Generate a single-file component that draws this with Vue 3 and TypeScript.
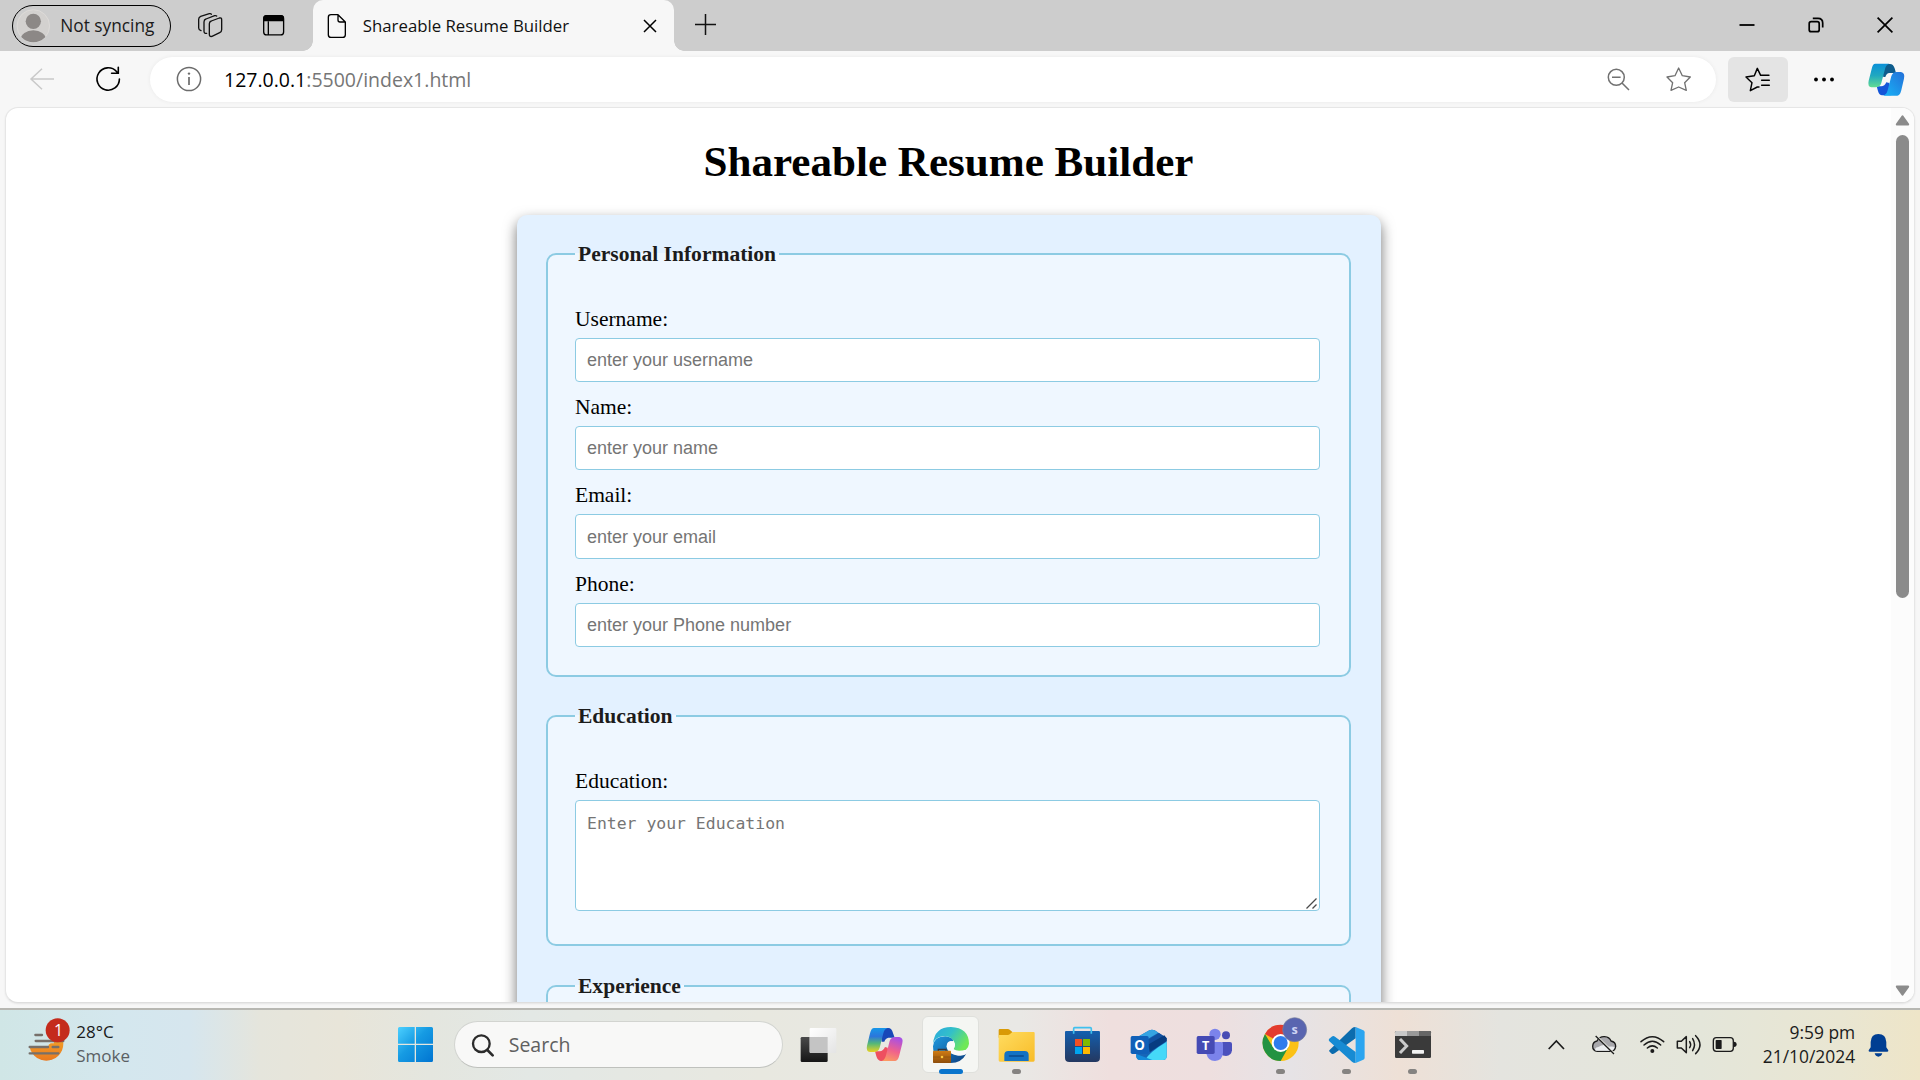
<script setup lang="ts">
interface Field {
  id: string
  label: string
  placeholder: string
  type: string
}

const fields: Field[] = [
  { id: 'username', label: 'Username:', placeholder: 'enter your username', type: 'text' },
  { id: 'name', label: 'Name:', placeholder: 'enter your name', type: 'text' },
  { id: 'email', label: 'Email:', placeholder: 'enter your email', type: 'email' },
  { id: 'phone', label: 'Phone:', placeholder: 'enter your Phone number', type: 'tel' },
]
</script>

<template>
  <div class="screen">
    <header class="tabbar">
      <div class="profile">
        <svg class="avatar" viewBox="50 28 100 102" width="33.3" height="34">
          <defs><clipPath id="avatarClip"><circle cx="99" cy="79" r="49" /></clipPath></defs>
          <circle cx="99" cy="79" r="49" fill="#d3d1cf" stroke="#e2e0dd" stroke-width="2" />
          <g fill="#8c8886" clip-path="url(#avatarClip)">
            <circle cx="99" cy="65" r="23" />
            <ellipse cx="99" cy="119" rx="38" ry="27" />
          </g>
        </svg>
        <span>Not syncing</span>
      </div>
      <svg class="collections" viewBox="591 36 78 78" width="26" height="26" fill="none" stroke="#111" stroke-width="4" stroke-linejoin="round" stroke-linecap="round">
        <path d="M628 71 q0 -6 6 -8 L658 54 q7 -2 7 5 V89 q0 6 -6 9 L636 109 q-8 2 -8 -6 Z" />
        <path d="M620 100 q-8 1 -8 -6 V66 q0 -7 6 -9 L644 47 q4 -1 6 1" />
        <path d="M603 92 q-7 -2 -7 -8 V58 q0 -6 6 -9 L628 41 q5 -1 6 2" />
      </svg>
      <svg class="tabactions" viewBox="784 43 70 68" width="23.3" height="22.6">
        <rect x="789" y="48" width="60" height="58" rx="9" fill="none" stroke="#000" stroke-width="4" />
        <path d="M788 65 V56 q0 -10 10 -10 H840 q10 0 10 10 V65 Z" fill="#000" />
        <path d="M803 65 V106" stroke="#000" stroke-width="4" />
      </svg>
      <div class="tab">
        <svg class="doc" viewBox="981 39 60 78" width="20" height="26" fill="none" stroke="#000" stroke-width="4" stroke-linejoin="round">
          <path d="M993 44 H1014 L1036 66 V104 q0 8 -8 8 H993 q-8 0 -8 -8 V52 q0 -8 8 -8 Z M1014 44 V60 q0 6 6 6 H1036" />
        </svg>
        <span class="tab-title">Shareable Resume Builder</span>
        <svg class="tab-close" viewBox="0 0 14 14" width="14" height="14" stroke="#000" stroke-width="1.5"><path d="M1 1 L13 13 M13 1 L1 13" /></svg>
      </div>
      <svg class="plus" viewBox="0 0 21 21" width="21" height="21" stroke="#111" stroke-width="1.5"><path d="M10.5 0 V21 M0 10.5 H21" /></svg>
      <div class="window-controls">
        <svg viewBox="0 0 16 16" width="16" height="16" stroke="#000" stroke-width="1.8"><path d="M0.5 8 H15.5" /></svg>
        <svg viewBox="0 0 16 16" width="16" height="16" fill="none" stroke="#000" stroke-width="1.7">
          <rect x="1.2" y="4.7" width="10" height="10" rx="2" />
          <path d="M4.8 1.3 H10 Q14.7 1.3 14.7 6 V10.6" />
        </svg>
        <svg viewBox="0 0 16 16" width="16" height="16" stroke="#000" stroke-width="1.7"><path d="M0.6 0.6 L15.4 15.4 M15.4 0.6 L0.6 15.4" /></svg>
      </div>
    </header>

    <nav class="toolbar">
      <svg class="back" viewBox="0 0 24 22" width="24" height="22" fill="none" stroke="#c9c9c9" stroke-width="1.5"><path d="M24 11 H1 M12 0.8 L1 11 L12 21.2" /></svg>
      <svg class="reload" viewBox="0 0 25 26" width="25" height="26" fill="none" stroke="#000" stroke-width="1.6" stroke-linecap="round">
        <path d="M23.4 13 A11.2 11.2 0 1 1 20.5 5.5 L22 7 M22.3 1.2 V7.3 H15.6" />
      </svg>
      <div class="address">
        <svg class="info" viewBox="0 0 26 26" width="26" height="26" fill="none" stroke="#6b6b6b" stroke-width="1.5">
          <circle cx="13" cy="13" r="11.6" /><path d="M13 11 V19" stroke-width="1.7" /><circle cx="13" cy="7.6" r="1.2" fill="#6b6b6b" stroke="none" />
        </svg>
        <span class="url"><b>127.0.0.1</b>:5500/index1.html</span>
        <svg class="zoomout" viewBox="0 0 23 23" width="23" height="23" fill="none" stroke="#717171" stroke-width="1.5"><circle cx="9.3" cy="9.3" r="8" /><path d="M5 9.3 H13.6 M15 15 L22 22" /></svg>
        <svg class="star" viewBox="317 202 76 74" width="25.3" height="24.7" fill="none" stroke="#717171" stroke-width="4" stroke-linejoin="round">
          <path d="M355 205 L366 228 L390 232 L373 249 L378 272 L355 262 L332 272 L337 249 L320 232 L344 228 Z" />
        </svg>
      </div>
      <div class="favorites">
        <svg viewBox="556 202 76 74" width="25.3" height="24.7" fill="none" stroke="#000" stroke-width="4.4" stroke-linejoin="round" stroke-linecap="round">
          <path d="M598 262 L593 262 L572 273 L577 249 L559 232 L584 228 L593 206 L603 227 H628 M606 242 H629 M606 257 H629" />
        </svg>
      </div>
      <svg class="dots" viewBox="0 0 20 5" width="20" height="5"><circle cx="2" cy="2.5" r="1.9" /><circle cx="10" cy="2.5" r="1.9" /><circle cx="18" cy="2.5" r="1.9" /></svg>
      <svg class="copilot" viewBox="926 190 112 100" width="37.3" height="33.3">
        <defs>
          <linearGradient id="ca" x1="0" y1="0" x2="0" y2="1"><stop offset="0" stop-color="#0a90d8" /><stop offset=".5" stop-color="#20a8c0" /><stop offset="1" stop-color="#62dc92" /></linearGradient>
          <linearGradient id="cb" x1="1" y1="0" x2="0" y2="1"><stop offset="0" stop-color="#2370d8" /><stop offset="1" stop-color="#18b4f8" /></linearGradient>
        </defs>
        <path d="M966 193 H992 Q1002 193 1006 206 L1010 220 H990 Q982 220 978 232 L972 232 Z" fill="#0e5c8c" />
        <path d="M996 287 H968 Q960 287 956 274 L952 260 H966 Q976 260 981 248 L990 250 Z" fill="#1455d8" />
        <path d="M948 192 H990 Q980 195 977 208 L966 250 Q962 263 948 263 H936 Q924 261 928 243 L937 208 Q940 192 948 192 Z" fill="url(#ca)" />
        <path d="M1014 288 H972 Q982 285 985 272 L996 230 Q1000 217 1012 217 H1025 Q1038 219 1034 237 L1026 272 Q1022 288 1014 288 Z" fill="url(#cb)" />
      </svg>
    </nav>

    <section class="viewport">
      <main class="page">
        <h1>Shareable Resume Builder</h1>
        <form class="card">
          <fieldset>
            <legend>Personal Information</legend>
            <template v-for="field in fields" :key="field.id">
              <label :for="field.id">{{ field.label }}</label>
              <input :id="field.id" :type="field.type" :placeholder="field.placeholder" />
            </template>
          </fieldset>
          <fieldset>
            <legend>Education</legend>
            <label for="education">Education:</label>
            <div class="area">
              <textarea id="education" placeholder="Enter your Education"></textarea>
              <svg class="grip" viewBox="0 0 11 11" width="11" height="11" stroke="#4a4a4a" stroke-width="1.3"><path d="M0.5 10.5 L10.5 0.5 M6.5 10.5 L10.5 6.5" /></svg>
            </div>
          </fieldset>
          <fieldset class="experience">
            <legend>Experience</legend>
          </fieldset>
        </form>
      </main>
      <aside class="scrollbar">
        <svg viewBox="0 0 15 11" width="15" height="11"><path d="M7.5 1.4 L13.2 9.4 H1.8 Z" fill="#8b8b8b" stroke="#8b8b8b" stroke-width="2" stroke-linejoin="round" /></svg>
        <div class="thumb"></div>
        <svg class="down" viewBox="0 0 15 11" width="15" height="11"><path d="M7.5 9.6 L13.2 1.6 H1.8 Z" fill="#8b8b8b" stroke="#8b8b8b" stroke-width="2" stroke-linejoin="round" /></svg>
      </aside>
    </section>

    <footer class="taskbar">
      <svg class="weather" viewBox="84 78 128 136" width="42.7" height="45.3">
        <defs>
          <linearGradient id="sun" x1="0" y1="0" x2="0" y2="1"><stop offset="0" stop-color="#f8b62c" /><stop offset="1" stop-color="#e97920" /></linearGradient>
          <clipPath id="sunClip"><path d="M84 170 H143 Q145 160 152 157 H162 Q158 148 175 148 H212 V214 H84 Z" /></clipPath>
        </defs>
        <circle cx="139" cy="158" r="51" fill="url(#sun)" clip-path="url(#sunClip)" />
        <path d="M106 132 H126 M107 150 H190 M89 168 H144 M158 168 H175 M89 187 H175" stroke="#77706a" stroke-width="7" stroke-linecap="round" />
        <circle cx="173" cy="118" r="36" fill="#c42b1c" />
        <text x="176" y="135" fill="#fff" font-size="48" text-anchor="middle" font-family="Open Sans, sans-serif">1</text>
      </svg>
      <div class="forecast"><span>28°C</span><span class="muted">Smoke</span></div>
      <svg class="start" viewBox="0 0 35 35" width="35" height="35">
        <defs><linearGradient id="win" x1="0" y1="0" x2="35" y2="35" gradientUnits="userSpaceOnUse"><stop offset="0" stop-color="#4cd0ff" /><stop offset=".45" stop-color="#169be3" /><stop offset="1" stop-color="#0074d1" /></linearGradient></defs>
        <path fill="url(#win)" d="M1.5 0 H16.7 V16.7 H0 V1.5 Q0 0 1.5 0 Z M18 0 H33.5 Q35 0 35 1.5 V16.7 H18 Z M0 18 H16.7 V35 H1.5 Q0 35 0 33.5 Z M18 18 H35 V33.5 Q35 35 33.5 35 H18 Z" />
      </svg>
      <div class="search">
        <svg viewBox="270 125 72 72" width="24" height="24" fill="none" stroke="#2b2b2b" stroke-width="7" stroke-linecap="round"><circle cx="301" cy="157" r="25" /><path d="M319 176 L335 192" stroke-width="8" /></svg>
        <span>Search</span>
      </div>
      <div class="apps">
        <div class="app">
          <svg viewBox="61 108 114 108" width="38" height="36">
            <defs>
              <linearGradient id="tv" x1="0" y1="0" x2="0" y2="1"><stop offset="0" stop-color="#4a4a4a" /><stop offset="1" stop-color="#161616" /></linearGradient>
              <linearGradient id="tw" x1="0" y1="0" x2="1" y2="1"><stop offset="0" stop-color="#fff" /><stop offset="1" stop-color="#e4e4e4" /></linearGradient>
            </defs>
            <rect x="63" y="138" width="81" height="75" rx="4" fill="url(#tv)" />
            <rect x="90" y="111" width="80" height="75" rx="3" fill="url(#tw)" />
            <path d="M90 138 H144 V186 H93 Q90 186 90 183 Z" fill="#c4c4c4" />
          </svg>
        </div>
        <div class="app">
          <svg viewBox="259 108 114 106" width="38" height="35.3">
            <defs>
              <linearGradient id="pa" x1="0" y1="0" x2="0" y2="1"><stop offset="0" stop-color="#1697e8" /><stop offset=".35" stop-color="#2b76dc" /><stop offset=".65" stop-color="#55b878" /><stop offset="1" stop-color="#e8d322" /></linearGradient>
              <linearGradient id="pb" x1=".6" y1="0" x2=".3" y2="1"><stop offset="0" stop-color="#a850e4" /><stop offset=".55" stop-color="#f0628c" /><stop offset="1" stop-color="#fb9a62" /></linearGradient>
            </defs>
            <path d="M300 111 H326 Q336 111 340 126 L345 140 H326 Q318 141 314 152 L306 152 Z" fill="#1848b8" />
            <path d="M330 210 H303 Q294 209 290 196 L286 181 H300 Q311 180 316 168 L324 170 Z" fill="#ee5060" />
            <path d="M283 111 H324 Q314 114 311 127 L300 170 Q296 183 282 183 H271 Q258 182 262 164 L271 127 Q275 111 283 111 Z" fill="url(#pa)" />
            <path d="M347 210 H306 Q316 207 319 193 L330 150 Q334 138 348 138 H359 Q372 140 368 157 L359 193 Q355 210 347 210 Z" fill="url(#pb)" />
          </svg>
        </div>
        <div class="app">
          <div class="tile">
            <svg viewBox="456 105 114 114" width="38" height="38">
              <defs>
                <linearGradient id="ea" x1="0" y1="0" x2="1" y2=".5"><stop offset="0" stop-color="#2aa8e0" /><stop offset=".5" stop-color="#33c0c8" /><stop offset="1" stop-color="#6fe856" /></linearGradient>
                <linearGradient id="eb" x1="0" y1="0" x2="1" y2="1"><stop offset="0" stop-color="#1f9ae0" /><stop offset="1" stop-color="#0c3f80" /></linearGradient>
                <linearGradient id="ec" x1="0" y1="0" x2="0" y2="1"><stop offset="0" stop-color="#d07c14" /><stop offset="1" stop-color="#8e4e0c" /></linearGradient>
              </defs>
              <path d="M459 166 Q462 136 496 136 Q520 140 520 150 Q499 150 500 168 Q504 190 534 194 Q552 194 559 188 Q544 216 512 216 Q459 212 459 166 Z" fill="url(#eb)" />
              <path d="M459 158 Q464 108 513 108 Q566 110 567 158 Q564 181 538 181 Q522 181 520 174 Q526 168 525 160 Q519 134 489 136 Q466 138 459 158 Z" fill="url(#ea)" />
              <path d="M500 168 Q500 150 513 150 Q525 152 525 162 Q522 170 521 175 Q532 183 559 176 Q560 183 557 189 Q536 196 518 188 Q504 181 500 168 Z" fill="#fafafa" />
              <path d="M475 180 v-5 h23 v5" fill="none" stroke="#34343c" stroke-width="4" />
              <rect x="459" y="179" width="54" height="37" rx="2" fill="url(#ec)" />
              <path d="M459 198 H513" stroke="#88500f" stroke-width="2" /><circle cx="486" cy="198" r="4" fill="#ffc83c" />
            </svg>
          </div>
          <i class="pill active"></i>
        </div>
        <div class="app">
          <svg viewBox="655 108 114 108" width="38" height="36">
            <defs><linearGradient id="fo" x1="0" y1="0" x2="1" y2="1"><stop offset="0" stop-color="#ffdc60" /><stop offset="1" stop-color="#f8bc28" /></linearGradient></defs>
            <path d="M657 118 Q657 114 661 114 H684 Q688 114 691 117 L698 123 V140 H657 Z" fill="#d99a06" />
            <path d="M657 132 H684 Q688 132 692 128 L698 123 H762 Q765 123 765 127 V208 Q765 212 761 212 H661 Q657 212 657 208 Z" fill="url(#fo)" />
            <path d="M674 210 V192 Q674 180 686 180 H735 Q747 180 747 192 V210 Z" fill="#1372c4" />
            <path d="M689 195 H731" stroke="#0b4a8c" stroke-width="4" stroke-linecap="round" />
          </svg>
          <i class="pill"></i>
        </div>
        <div class="app">
          <svg viewBox="852 108 112 110" width="37.3" height="36.7">
            <defs><linearGradient id="st" x1="0" y1="0" x2="0" y2="1"><stop offset="0" stop-color="#145fae" /><stop offset="1" stop-color="#243860" /></linearGradient></defs>
            <path d="M858 123 H957 Q960 123 960 126 V203 Q960 216 947 216 H868 Q855 216 855 203 V126 Q855 123 858 123 Z" fill="url(#st)" />
            <path d="M881 131 V116 Q881 113 884 113 H931 Q934 113 934 116 V131" fill="none" stroke="#40c0ee" stroke-width="5" />
            <path d="M885 147 h21 v21 h-21 Z" fill="#f25022" /><path d="M909 147 h21 v21 h-21 Z" fill="#7fba00" />
            <path d="M885 171 h21 v21 h-21 Z" fill="#00a4ef" /><path d="M909 171 h21 v21 h-21 Z" fill="#ffb900" />
          </svg>
        </div>
        <div class="app">
          <svg viewBox="61 108 114 108" width="38" height="36">
            <path d="M80 140 L119 118 Q127 114 135 118 L171 142 V196 Q171 207 160 207 H92 Q80 207 80 196 Z" fill="#1766b8" />
            <path d="M82 139 L119 118 Q127 114 135 118 L146 125 L100 152 Z" fill="#36a4e2" />
            <path d="M108 150 L148 126 L170 140 L120 178 Z" fill="#1250a0" />
            <path d="M117 160 L164 133 L171 142 V150 L120 184 Z" fill="#073c80" />
            <path d="M171 152 V196 Q171 207 160 207 H106 Q118 184 171 152 Z" fill="#45d8f8" />
            <path d="M80 189 L128 207 H92 Q80 207 80 196 Z" fill="#148cdc" />
            <rect x="63" y="135" width="54" height="54" rx="5" fill="#1060b8" />
            <text x="90" y="176" fill="#fff" font-size="40" font-weight="700" text-anchor="middle" font-family="Open Sans, sans-serif">O</text>
          </svg>
        </div>
        <div class="app">
          <svg viewBox="259 108 114 108" width="38" height="36">
            <circle cx="349" cy="133" r="12" fill="#484cb4" />
            <path d="M338 153 H361 Q367 153 367 159 V178 Q365 194 349 195 Q338 195 334 188 Z" fill="#4b50bc" />
            <circle cx="316" cy="130" r="17" fill="#7b83eb" />
            <path d="M292 153 H334 Q340 153 340 159 V186 Q338 209 316 210 Q294 209 291 190 Z" fill="#7b83eb" />
            <rect x="261" y="135" width="54" height="54" rx="5" fill="#454ab4" />
            <text x="288" y="176" fill="#fff" font-size="38" font-weight="700" text-anchor="middle" font-family="Open Sans, sans-serif">T</text>
          </svg>
        </div>
        <div class="app">
          <svg class="chrome" viewBox="457 84 138 135" width="46" height="45">
            <circle cx="513" cy="162" r="54" fill="#fbc116" />
            <path d="M513 162 L466 135 A54 54 0 0 1 560 135 Z" fill="#e33b2e" />
            <path d="M466 135 A54 54 0 0 0 513 216 L536 175 L490 175 Z" fill="#229342" />
            <circle cx="513" cy="162" r="27" fill="#fff" /><circle cx="513" cy="162" r="21" fill="#2f7cec" />
            <circle cx="555" cy="122" r="36" fill="#5965b0" stroke="#78809c" stroke-width="2" />
            <text x="555" y="134" fill="#cfd4f4" font-size="38" font-weight="700" text-anchor="middle" font-family="Open Sans, sans-serif">s</text>
          </svg>
          <i class="pill"></i>
        </div>
        <div class="app">
          <svg viewBox="655 105 112 114" width="37.3" height="38">
            <path d="M659 178 L727 112 Q731 108 738 108 V142 L675 187 Q670 191 666 188 L660 182 Q657 180 659 178 Z" fill="#0c6cae" />
            <path d="M658 144 L666 137 Q671 133 676 137 L738 183 V216 Q731 216 727 212 L659 151 Q656 148 658 144 Z" fill="#178bd3" />
            <path d="M738 108 L761 118 Q765 120 765 124 V200 Q765 204 761 206 L738 216 Z" fill="#2ba5f0" />
          </svg>
          <i class="pill"></i>
        </div>
        <div class="app">
          <svg viewBox="852 108 114 108" width="38" height="36">
            <rect x="855" y="120" width="108" height="81" rx="4" fill="#3a3a3a" />
            <path d="M855 135 V124 Q855 120 859 120 H891 V135 Z" fill="#c8c8c8" /><path d="M891 120 H927 V135 H891 Z" fill="#999" /><path d="M927 120 H959 Q963 120 963 124 V135 H927 Z" fill="#666" />
            <path d="M873 147 L890 165 L873 183" fill="none" stroke="#ccc" stroke-width="9" stroke-linecap="square" />
            <rect x="906" y="177" width="36" height="11" rx="2" fill="#f2f2f2" />
          </svg>
          <i class="pill"></i>
        </div>
      </div>
      <div class="tray">
        <svg viewBox="146 203 50 34" width="16.7" height="11.3" fill="none" stroke="#1b1b1b" stroke-width="5"><path d="M148 233 L171 209 L194 233" /></svg>
        <svg class="cloud" viewBox="276 192 78 62" width="26" height="20.7">
          <path d="M295 244 Q281 243 281 229 Q282 215 294 213 Q301 199 317 200 Q331 201 336 213 Q350 216 350 229 Q348 243 336 244 Z" fill="#a8a8ac" stroke="#1b1b1b" stroke-width="4" />
          <path d="M290 242 Q284 234 298 231 Q316 219 327 230 Q345 228 347 232 Q344 242 336 242 Z" fill="#eceef0" />
          <path d="M292 198 L347 252" stroke="#eceee6" stroke-width="6" /><path d="M290 198 L345 252" stroke="#1b1b1b" stroke-width="4" />
        </svg>
        <svg class="wifi" viewBox="422 192 74 56" width="24.7" height="18.7" fill="none" stroke="#1b1b1b" stroke-width="4.5" stroke-linecap="round">
          <path d="M425 212 Q459 182 493 212 M434 222 Q459 199 484 222 M444 231 Q459 218 474 231" /><circle cx="459" cy="240" r="6" fill="#1b1b1b" stroke="none" />
        </svg>
        <svg class="sound" viewBox="529 190 76 64" width="25.3" height="21.3" fill="none" stroke="#1b1b1b" stroke-width="4.5" stroke-linecap="round" stroke-linejoin="round">
          <path d="M533 212 H545 L560 198 V246 L545 232 H533 Z" /><path d="M570 213 Q576 222 570 231 M579 204 Q590 222 579 240 M588 195 Q614 222 588 249" />
        </svg>
        <svg class="battery" viewBox="637 196 76 50" width="25.3" height="16.7">
          <rect x="641" y="201" width="60" height="41" rx="9" fill="none" stroke="#1b1b1b" stroke-width="4" /><rect x="648" y="208" width="18" height="27" rx="2" fill="#1b1b1b" /><path d="M703 213 Q711 213 711 221 Q711 229 703 229 Z" fill="#1b1b1b" />
        </svg>
      </div>
      <div class="clock"><span>9:59 pm</span><span>21/10/2024</span></div>
      <svg class="bell" viewBox="1102 187 64 72" width="21.3" height="24" fill="#003e92">
        <path d="M1133 190 Q1156 190 1157 214 V230 L1163 239 Q1164 243 1160 243 H1107 Q1103 243 1104 239 L1110 230 V214 Q1111 190 1133 190 Z M1122 248 H1145 Q1142 258 1133 258 Q1125 258 1122 248 Z" />
      </svg>
    </footer>
  </div>
</template>

<style>
body { margin: 0; overflow: hidden; }
</style>

<style scoped>
.screen { width: 1920px; height: 1080px; display: flex; flex-direction: column; overflow: hidden; background: #f7f7f7; color: #1b1b1b; font-family: "Open Sans", "Noto Sans", sans-serif; }
svg { display: block; flex: none; overflow: visible; }
.screen span { white-space: nowrap; }

.tabbar { flex: none; height: 51px; display: flex; background: #cdcdcd; }
.profile { box-sizing: border-box; width: 159px; height: 41.5px; margin: 5px 0 0 12px; border: 1.5px solid #000; border-radius: 21px; display: flex; align-items: center; font-size: 17.3px; color: #1b1b1b; }
.avatar { margin-left: 3.5px; }
.profile span { margin-left: 10.5px; }
.collections { margin: 12px 0 0 26px; }
.tabactions { margin: 14px 0 0 38.5px; }
.tab { position: relative; width: 361px; height: 51px; margin-left: 28px; border-radius: 10px 10px 0 0; background: #f7f7f7; display: flex; align-items: center; }
.tab::before, .tab::after { content: ""; position: absolute; bottom: 0; width: 10px; height: 10px; }
.tab::before { left: -10px; background: radial-gradient(circle at 0 0, #cdcdcd 9.5px, #f7f7f7 10px); }
.tab::after { right: -10px; background: radial-gradient(circle at 100% 0, #cdcdcd 9.5px, #f7f7f7 10px); }
.doc { margin-left: 14px; }
.tab-title { margin-left: 16px; width: 206px; font-size: 16.8px; color: #111; }
.tab-close { margin-left: 74.5px; }
.plus { margin: 14px 0 0 21.5px; }
.window-controls { margin: 17px 27px 0 auto; display: flex; gap: 53px; }

.toolbar { flex: none; height: 56px; display: flex; align-items: center; }
.back { margin-left: 30px; }
.reload { margin-left: 41.5px; }
.address { box-sizing: border-box; width: 1566px; height: 45px; margin-left: 29.5px; border-radius: 23px; background: #fff; box-shadow: 0 0 4px rgba(0, 0, 0, .06); display: flex; align-items: center; }
.info { margin-left: 26px; }
.url { margin-left: 22px; font-size: 19.5px; color: #767676; }
.url b { font-weight: 400; color: #000; }
.zoomout { margin-left: auto; }
.star { margin: 0 25px 0 36px; }
.favorites { width: 60px; height: 45px; margin-left: 12px; border-radius: 6px; background: #e4e4e4; display: flex; align-items: center; justify-content: center; }
.dots { margin-left: 26px; }
.copilot { margin: 1px 0 0 34px; }

.viewport { flex: none; box-sizing: border-box; width: 1910px; height: 896px; margin-left: 5px; border: 1px solid #e6e6e6; border-bottom-color: #dedede; border-radius: 13px; background: #fff; box-shadow: 0 1px 2px rgba(0, 0, 0, .08); overflow: hidden; display: flex; }
.page { width: 1885px; height: 894px; overflow: hidden; font-family: "Liberation Serif", "Times New Roman", serif; color: #000; display: flex; flex-direction: column; align-items: center; }
h1 { flex: none; margin: 29px 0 28px; font-size: 43.1px; line-height: 50px; font-weight: 700; }
.card { flex: none; box-sizing: border-box; width: 864px; height: 1100px; padding: 27px 29.5px; border-radius: 10px; background: #e3f1ff; box-shadow: 0 6px 14px rgba(0, 0, 0, .55); }
fieldset { box-sizing: border-box; width: 805px; margin: 0 0 27.5px; padding: 27.7px 28px 27.4px 27px; border: 2px solid #8ccbe3; border-radius: 10px; background: #eff7ff; }
.experience { height: 300px; }
legend { padding: 0 3px; font-size: 21.55px; line-height: 24px; font-weight: 700; color: #1c1c1c; }
label { display: block; margin: 12.9px 0 7.1px; font-size: 21.5px; line-height: 24px; }
input, textarea { display: block; box-sizing: border-box; width: 745px; margin: 0; border: 1px solid #8ccbe3; border-radius: 4px; background: #fff; outline: none; }
input { height: 44.4px; padding: 1px 11px 0; font: 18px "Liberation Sans", Arial, sans-serif; }
.area { position: relative; width: 745px; margin-bottom: 6px; }
textarea { height: 111px; padding: 13px 11px; font: 16.45px/20px "DejaVu Sans Mono", monospace; resize: none; }
.grip { position: absolute; right: 3px; bottom: 2px; }
::placeholder { color: #757575; opacity: 1; }
.scrollbar { width: 23px; background: #fcfcfc; display: flex; flex-direction: column; align-items: center; padding-top: 7px; box-sizing: border-box; }
.thumb { width: 13px; height: 463px; margin-top: 9px; border-radius: 7px; background: #8b8b8b; }
.scrollbar .down { margin: auto 0 6px; }

.taskbar { flex: none; box-sizing: border-box; height: 72px; margin-top: 5px; border-top: 2px solid #b7b7b2; display: flex; align-items: center; background: linear-gradient(90deg, #d0e6e6 0, #d4e7ee 120px, #d6e6ee 190px, #e5e5dc 260px, #e8e5d9 340px, #e4e6df 430px, #e3e8e5 530px, #e8e8e0 760px, #e9e8e5 1020px, #efdfde 1110px, #eedfdf 1210px, #e6e3e6 1290px, #eee0d6 1400px, #e4e4df 1500px, #e4e6da 1700px, #e9e6d2 1840px, #eee5c8 1920px); }
.weather { margin: -11px 0 0 28px; }
.forecast { width: 60px; margin: -2px 0 0 5.5px; display: flex; flex-direction: column; font-size: 17px; line-height: 24px; }
.muted { color: #5a6063; }
.start { margin: -1px 0 0 261.5px; }
.search { box-sizing: border-box; width: 329px; height: 47px; margin: -1px 0 0 21px; border: 1.5px solid #d2d4d0; border-bottom-color: #bfc1bd; border-radius: 24px; background: #f8f8f7; display: flex; align-items: center; font-size: 19.5px; color: #606060; }
.search svg { margin-left: 16px; }
.search span { margin: -1px 0 0 14px; }
.apps { display: flex; margin: -1px 0 0 3px; }
.app { position: relative; width: 66px; height: 70px; display: flex; align-items: center; justify-content: center; }
.app .chrome { margin: -10px 0 0 8px; }
.tile { width: 57px; height: 57px; border: 1px solid #dfe0dc; border-radius: 6px; background: #f5f6f3; display: flex; align-items: center; justify-content: center; flex: none; box-sizing: border-box; }
.pill { position: absolute; left: 28.5px; bottom: 6px; width: 9px; height: 5px; border-radius: 3px; background: #858381; }
.pill.active { left: 21px; width: 24px; background: #0a74cc; }
.tray { display: flex; align-items: center; margin: -1px 0 0 102.5px; }
.cloud { margin-left: 26px; }
.wifi { margin-left: 23px; }
.sound { margin-left: 11px; }
.battery { margin-left: 11px; }
.clock { width: 118px; margin-top: -2px; display: flex; flex-direction: column; align-items: flex-end; font-size: 17.4px; line-height: 24px; }
.bell { margin: -1px 0 0 12.5px; }
</style>
